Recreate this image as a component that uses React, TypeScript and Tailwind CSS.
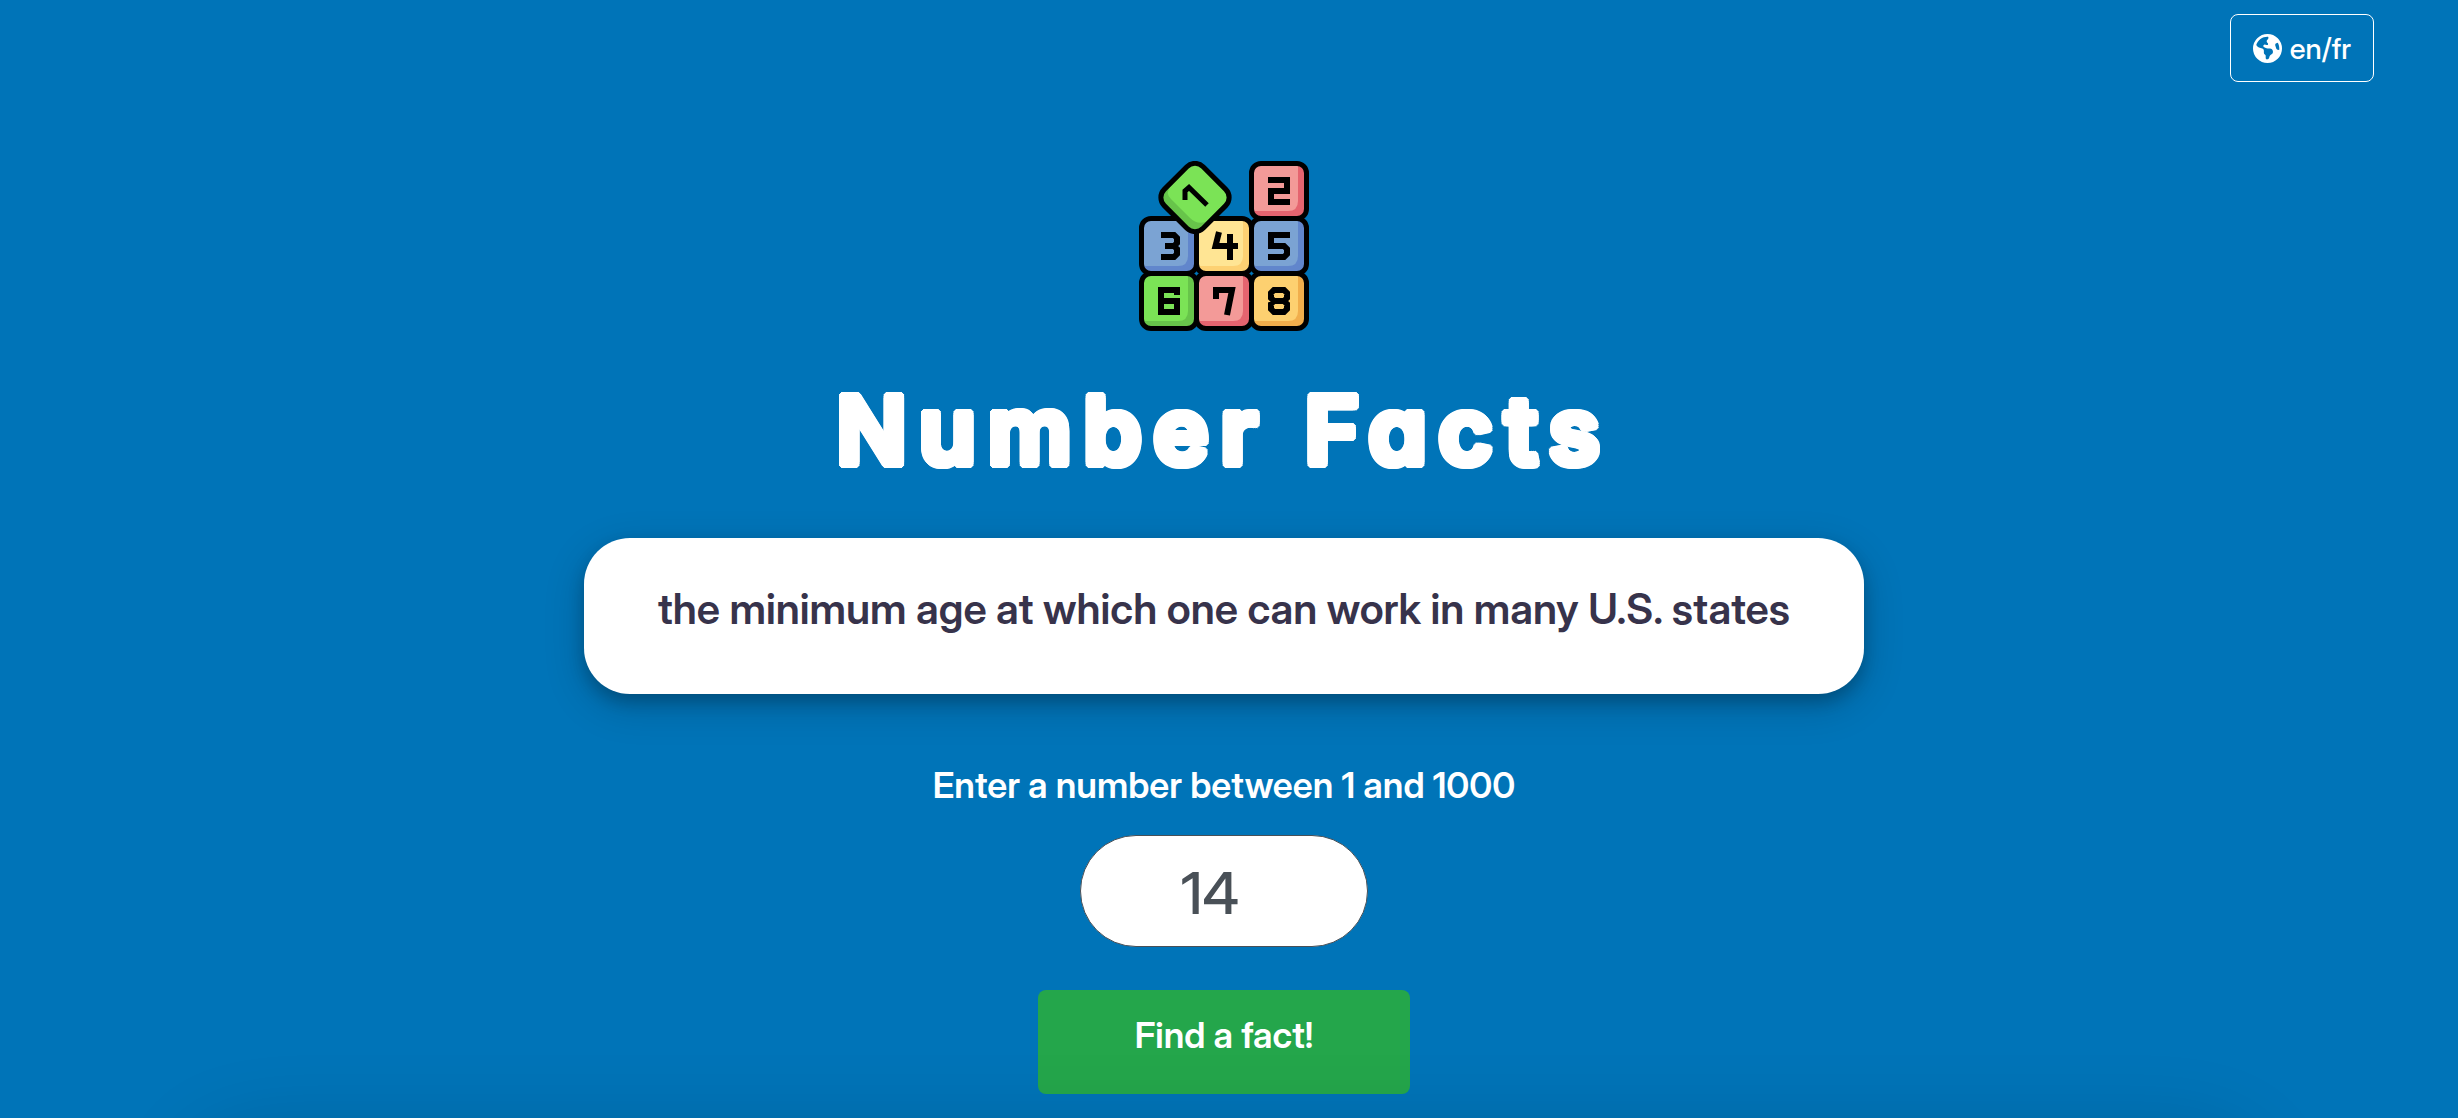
import { FaEarthAmericas } from "react-icons/fa6";

type Palette = { face: string; shade: string };

const green: Palette = { face: "#7be356", shade: "#67c44a" };
const red: Palette = { face: "#f39a98", shade: "#e5646f" };
const blue: Palette = { face: "#7ba3d3", shade: "#6186cc" };
const cream: Palette = { face: "#ffe594", shade: "#fdd173" };
const amber: Palette = { face: "#fdd070", shade: "#f1ae4c" };

function Block({ x, y, palette, digit }: { x: number; y: number; palette: Palette; digit: string }) {
  return (
    <g transform={`translate(${x} ${y})`}>
      <rect x="2.5" y="2.5" width="55" height="55" rx="9.5" fill={palette.shade} />
      <path d="M5 5H49V40Q49 50 39 50H5Z" fill={palette.face} />
      <path d={digit} fill="none" stroke="#000" strokeWidth="6" />
      <rect x="2.5" y="2.5" width="55" height="55" rx="9.5" fill="none" stroke="#000" strokeWidth="5" />
    </g>
  );
}

function BlocksLogo() {
  return (
    <svg viewBox="0 0 170 170" className="size-[170px]" role="img" aria-label="Number blocks">
      <Block x={110} y={0} palette={red} digit="M19 19H38V30H22V41H41" />
      <Block x={0} y={55} palette={blue} digit="M22 19H35L38 22V27L35 30H26M35 30L38 33V38L35 41H22" />
      <Block x={55} y={55} palette={cream} digit="M25 16L21.500 30H44M36 18V44" />
      <Block x={110} y={55} palette={blue} digit="M41 19H22V30H35L38 33V38L35 41H19" />
      <Block x={0} y={110} palette={green} digit="M38 24V19H22V41H38V30H22" />
      <Block x={55} y={110} palette={red} digit="M22 28V19H38L33 44" />
      <Block x={110} y={110} palette={amber} digit="M25 19H35L38 22V27L35 30H25L22 27V22ZM25 30H35L38 33V38L35 41H25L22 38V33Z" />
      <g transform="translate(56 36.500) rotate(45)">
        <rect x="-27.5" y="-27.5" width="55" height="55" rx="11.5" fill={green.shade} />
        <path d="M-25 -16Q-25 -25 -16 -25H16Q25 -25 25 -16V9Q21 18 11 18H-16Q-25 18 -25 9Z" fill={green.face} />
        <rect x="-27.5" y="-27.5" width="55" height="55" rx="11.5" fill="none" stroke="#000" strokeWidth="5" />
      </g>
      <path d="M46 39V30L50 26.500L68 44" fill="none" stroke="#000" strokeWidth="5" />
    </svg>
  );
}

export default function App() {
  return (
    <div className="h-screen overflow-hidden bg-[#0074b8] pr-[10px] font-['Inter_Display','Inter',sans-serif] text-white">
      <header className="flex justify-end pt-[14px] pr-[74px]">
        <button className="flex h-[68px] items-center gap-2 rounded-lg border border-white px-[22px] text-[29px] leading-none font-medium">
          <FaEarthAmericas className="size-[29px]" />
          <span>en/fr</span>
        </button>
      </header>

      <main className="flex flex-col items-center">
        <div className="mt-[79px]">
          <BlocksLogo />
        </div>
        <h1 className="mt-[39px] font-['Inter',sans-serif] text-[93px] leading-[120px] font-semibold tracking-[12px] [font-feature-settings:'cv11'] [text-shadow:4px_0_#fff,-4px_0_#fff,0_4px_#fff,0_-4px_#fff,3px_3px_#fff,-3px_3px_#fff,3px_-3px_#fff,-3px_-3px_#fff,4px_2px_#fff,-4px_2px_#fff,4px_-2px_#fff,-4px_-2px_#fff,2px_4px_#fff,-2px_4px_#fff,2px_-4px_#fff,-2px_-4px_#fff]">
          Number Facts
        </h1>
        <p className="mt-12 w-full max-w-[1280px] rounded-[46px] bg-white pt-[43px] pb-[57px] text-center text-[42px] leading-[56px] font-semibold text-[#37334b] shadow-[0_8px_16px_rgba(0,0,0,0.2),0_12px_40px_rgba(0,0,0,0.19)]">
          the minimum age at which one can work in many U.S. states
        </p>
        <form className="flex flex-col items-center" onSubmit={(e) => e.preventDefault()}>
          <label htmlFor="number" className="mt-[63px] text-[36px] leading-[56px] font-semibold">
            Enter a number between 1 and 1000
          </label>
          <input
            id="number"
            inputMode="numeric"
            defaultValue="14"
            className="mt-[22px] h-28 w-[288px] rounded-full border border-[#495057] bg-white pt-1 pr-7 text-center text-[58px] font-medium text-[#495057] outline-none"
          />
          <button type="submit" className="mt-[43px] h-[104px] w-[372px] rounded-lg bg-[#24a64b] pb-[14px] text-[36px] font-semibold">
            Find a fact!
          </button>
        </form>
        <section className="mt-12 h-60 w-[84%] shrink-0 rounded-[60px] bg-white shadow-[0_0_90px_rgba(0,0,0,0.2)]" />
      </main>
    </div>
  );
}
